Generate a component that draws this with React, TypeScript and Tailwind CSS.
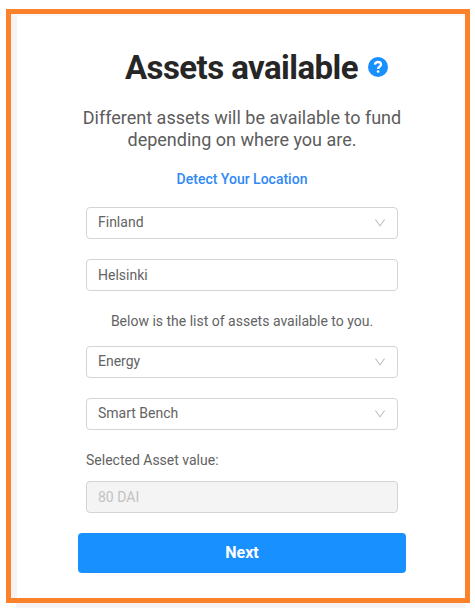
import React from "react";

function Chevron() {
  return (
    <svg className="h-3 w-3 text-[#bfbfbf]" viewBox="64 64 896 896" fill="currentColor">
      <path d="M884 256h-75c-5.100 0-9.900 2.500-12.900 6.600L512 654.200 227.900 262.600c-3-4.100-7.800-6.600-12.900-6.600h-75c-6.500 0-10.300 7.400-6.500 12.700l352.600 486.100c12.800 17.600 39 17.600 51.700 0l352.600-486.100c3.900-5.300.1-12.700-6.400-12.700z" />
    </svg>
  );
}

function Field({ value, select = false, disabled = false }: { value: string; select?: boolean; disabled?: boolean }) {
  return (
    <div
      className={`flex h-8 w-[312px] items-center justify-between rounded-[4px] border border-[#d4d4d4] px-[11px] text-sm ${
        disabled ? "bg-[#f4f4f4] text-[#c2c2c2]" : "bg-white text-[#636363]"
      }`}
    >
      <span className={select ? "pb-[2px]" : ""}>{value}</span>
      {select && <Chevron />}
    </div>
  );
}

export default function App() {
  return (
    <div className="flex h-[608px] w-[475px] flex-col bg-white pt-[9px] pl-[6px] font-['Roboto',sans-serif]">
      <div className="flex h-[594px] w-[464px] shrink-0 flex-col border-[5px] border-[#fb822b] bg-white">
        <div className="h-[2px] w-full shrink-0 bg-[#f8f6f6]" />
        <div className="flex min-h-0 w-full flex-1 flex-col border-l-[6px] border-[#f6f3f4] pl-[61px]">
          <div className="mt-[30px] ml-[47px] flex h-[44px] items-center gap-[10px]">
            <h1 className="text-[33px] leading-[44px] font-bold tracking-[-0.57px] whitespace-nowrap text-[#262626]">Assets available</h1>
            <svg className="-mt-[2px] h-5 w-5" viewBox="0 0 20 20">
              <circle cx="10" cy="10" r="10" fill="#1890ff" />
              <path d="M6.900 7.600C7.100 5.800 8.300 5 10 5s3 1 3 2.600c0 1.200-.8 1.700-1.700 2.300-.8.500-1.200.9-1.200 2" fill="none" stroke="white" strokeWidth="2.300" />
              <circle cx="10.100" cy="14.500" r="1.350" fill="white" />
            </svg>
          </div>
          <p className="mt-[17px] w-[328px] text-center text-[18px] leading-[22px] text-[#5c5c5c]">
            Different assets will be available to fund
            <br />
            depending on where you are.
          </p>
          <p className="mt-[17px] w-[328px] text-center text-sm leading-[22px] font-medium text-[#3089f5]">Detect Your Location</p>
          <div className="mt-[17px] ml-2 flex flex-col">
            <Field value="Finland" select />
            <div className="h-5" />
            <Field value="Helsinki" />
            <p className="mt-[19px] mb-[14px] h-[22px] w-[312px] text-center text-sm leading-[22px] text-[#636363]">Below is the list of assets available to you.</p>
            <Field value="Energy" select />
            <div className="h-5" />
            <Field value="Smart Bench" select />
            <p className="mt-[19px] mb-[10px] h-[22px] text-sm leading-[22px] text-[#636363]">Selected Asset value:</p>
            <Field value="80 DAI" disabled />
          </div>
          <button className="mt-5 h-10 w-[328px] shrink-0 rounded-[4px] bg-[#1890ff] text-base font-bold text-white">Next</button>
        </div>
      </div>
      <div className="ml-[10px] h-[5px] w-[449px] shrink-0 bg-[#f6f3f4]" />
    </div>
  );
}
